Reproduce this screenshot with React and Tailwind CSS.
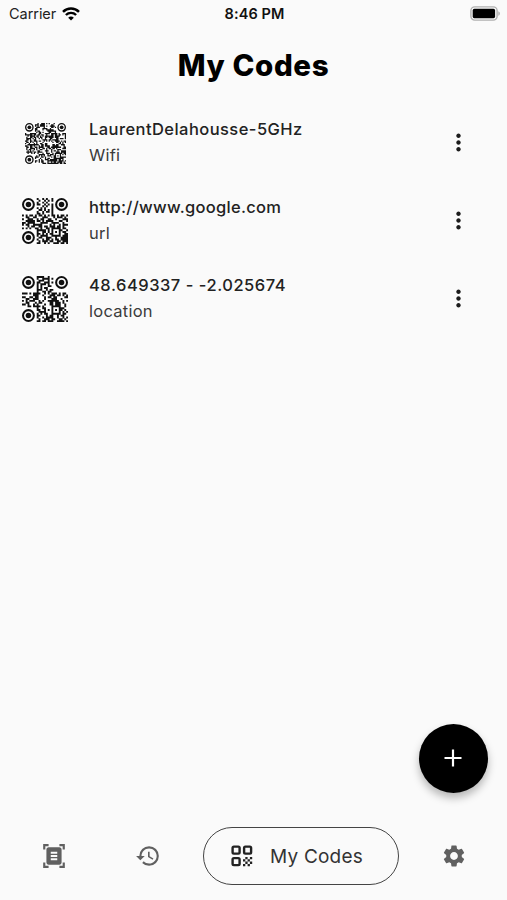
import React from "react";
import { MdDocumentScanner, MdHistory, MdSettings, MdMoreVert } from "react-icons/md";

const URL_ROWS = [
  "........#..#.#..#........",
  ".........#..#.#.#........",
  "........#..#.#...........",
  "........##..#.#.#........",
  "...........#.#..#........",
  "........#.#.#...#........",
  ".........##.#.#.#........",
  "........#..#.##.#........",
  "........##.#....#........",
  "#.#.##.#.##.#.#.##.#.##.#",
  "..##..##...###...#.###.#.",
  "#..###..#.##..##..#...###",
  "..#####.##.#.####...##..#",
  "##.####...####..####..#..",
  "#.##..#####....#.#..#.###",
  "...#.##..##.##.###.##.#..",
  "#.#.#..##.#..##.#####.##.",
  "........#####.#.#...##..#",
  "........#..##.#.#.#.#.##.",
  "........##.#.#.##...#..##",
  "........#.####..#####.###",
  ".........##..###..#..####",
  "........#..#.##.#.##.####",
  ".........#.###.##..##.###",
  "........##..#.#..###.##.#",
];

const LOCATION_ROWS = [
  "........####..#..........",
  "........#..####.#........",
  ".........###..#..........",
  "........##..###.#........",
  "........#.###.#..........",
  "........#.#...##.........",
  "........#.#.##...........",
  "........###..#.##........",
  "........#..##.##.........",
  "###.#.####..#.#.###.#.##.",
  "......###..#...###.##.#.#",
  "##..##.##...#.##.##....##",
  "..##..###...#...###..#...",
  "#.#.###..#.#..######..#.#",
  "..##...#.##....##.###.#..",
  "##.#..#.#...#..##.###..#.",
  "...##.####.#....#####..#.",
  "........#..##...#...###..",
  "........##..#.#.#.#.##.#.",
  ".........####...#...#.#.#",
  "........#.#.##..#####.##.",
  "........##...#.##..#.##..",
  "........#..#.####..#..#.#",
  ".........#..###.##..##.#.",
  "........##.##.###..####.#",
];

const WIFI_SIZE = 33;

function inFinder(x, y, n) {
  return (x < 8 && y < 8) || (x >= n - 8 && y < 8) || (x < 8 && y >= n - 8);
}

function buildWifiRows() {
  let seed = 4817;
  const rows = [];
  for (let y = 0; y < WIFI_SIZE; y++) {
    let row = "";
    for (let x = 0; x < WIFI_SIZE; x++) {
      seed = (seed * 1103515 + 12345) % 2147483648;
      const ring = Math.max(Math.abs(x - 26), Math.abs(y - 26));
      const on = ring <= 2 ? ring !== 1 : (seed >> 12) % 100 < 50;
      row += on ? "#" : ".";
    }
    rows.push(row);
  }
  return rows;
}

const WIFI_ROWS = buildWifiRows();

function QrCode({ rows, className }) {
  const n = rows.length;
  let d = "";
  rows.forEach((row, y) => {
    for (let x = 0; x < n; x++) {
      if (row[x] === "#" && !inFinder(x, y, n)) d += `M${x} ${y}h1.03v1.03h-1.03z`;
    }
  });
  const finders = [
    [3.5, 3.5],
    [n - 3.5, 3.5],
    [3.5, n - 3.5],
  ];
  return (
    <svg viewBox={`0 0 ${n} ${n}`} className={className}>
      <rect width={n} height={n} fill="#fff" />
      <path d={d} fill="#111" />
      {finders.map(([cx, cy]) => (
        <g key={`${cx}-${cy}`}>
          <circle cx={cx} cy={cy} r="2.95" fill="none" stroke="#111" strokeWidth="1.1" />
          <circle cx={cx} cy={cy} r="1.5" fill="#111" />
        </g>
      ))}
    </svg>
  );
}

const CODES = [
  { title: "LaurentDelahousse-5GHz", type: "Wifi", rows: WIFI_ROWS, size: "size-[41px]", track: "tracking-[0.44px]" },
  { title: "http://www.google.com", type: "url", rows: URL_ROWS, size: "size-[46px]", track: "tracking-[0.28px]" },
  { title: "48.649337 - -2.025674", type: "location", rows: LOCATION_ROWS, size: "size-[46px]", track: "tracking-[0.52px]" },
];

function WifiIcon() {
  return (
    <svg viewBox="0 0 18 14" className="h-[14px] w-[18px]" fill="none" stroke="#000">
      <path d="M1 4.9a11.4 11.4 0 0 1 16 0" strokeWidth="2.5" />
      <path d="M3.9 8a7.3 7.3 0 0 1 10.2 0" strokeWidth="2.4" />
      <path d="M9 13.6 6.2 10.8a3.9 3.9 0 0 1 5.6 0z" fill="#000" stroke="none" />
    </svg>
  );
}

function BatteryIcon() {
  return (
    <svg viewBox="0 0 31 15" className="h-[15px] w-[31px]">
      <rect x="1.9" y="0.9" width="26.2" height="13.2" rx="3.8" fill="#fafafa" stroke="#b0b0b0" strokeWidth="1.4" />
      <rect x="3.7" y="2.8" width="22.4" height="9.4" rx="1.6" fill="#000" />
      <path d="M29.3 5.2c2.1.8 2.1 3.8 0 4.6z" fill="#b0b0b0" />
    </svg>
  );
}

function QrNavIcon() {
  return (
    <svg viewBox="0 0 22 22" className="size-[22px]" fill="#222">
      <g fill="none" stroke="#222" strokeWidth="2.4">
        <rect x="1.6" y="1.6" width="7" height="7" rx="1.3" />
        <rect x="13.1" y="1.6" width="7" height="7" rx="1.3" />
        <rect x="1.6" y="13.1" width="7" height="7" rx="1.3" />
      </g>
      <path d="M14.3 12h2.3v2.3h-2.3zM18.9 12h2.3v2.3h-2.3zM12 14.3h2.3v2.3H12zM16.6 14.3h2.3v2.3h-2.3zM14.3 16.6h2.3v2.3h-2.3zM18.9 16.6h2.3v2.3h-2.3zM12 18.9h2.3v2.3H12zM16.6 18.9h2.3v2.3h-2.3z" />
    </svg>
  );
}

export default function App() {
  return (
    <div className="relative flex h-[900px] w-[507px] flex-col overflow-hidden bg-[#fafafa] font-['Inter',sans-serif] text-black">
      <header className="grid h-[27px] grid-cols-3 items-center pl-[9px] pr-[7px] text-[14.5px] leading-none">
        <div className="flex items-center gap-[6px] text-[#222]">
          <span className="pt-0.5 tracking-[-0.05px]">Carrier</span>
          <WifiIcon />
        </div>
        <div className="pt-0.5 text-center text-[14.5px] font-semibold tracking-[0.1px] text-[#111]">8:46 PM</div>
        <div className="flex justify-end">
          <BatteryIcon />
        </div>
      </header>

      <h1 className="mt-[18px] text-center text-[29.5px] font-extrabold leading-10 tracking-[0.6px]">My Codes</h1>

      <ul className="mt-[18px] flex flex-col">
        {CODES.map((code) => (
          <li key={code.title} className="flex h-[78px] items-center pl-[22px] pr-[35.5px]">
            <div className="flex w-[67px] items-center pt-[2px]">
              <div className="flex w-[46px] justify-center">
                <QrCode rows={code.rows} className={code.size} />
              </div>
            </div>
            <div className="flex-1">
              <p className={`text-[16.5px] font-medium leading-[26px] text-[#222] ${code.track}`}>{code.title}</p>
              <p className="text-[16.5px] leading-[26px] tracking-[0.25px] text-[#3c3c3c]">{code.type}</p>
            </div>
            <MdMoreVert className="size-[27px] text-[#1c1c1c]" />
          </li>
        ))}
      </ul>

      <nav className="mt-auto flex h-[88px] items-center">
        <button className="flex w-[107px] justify-center">
          <MdDocumentScanner className="size-[26px] text-[#606060]" />
        </button>
        <button className="flex w-[81px] justify-center">
          <MdHistory className="size-[26px] text-[#606060]" />
        </button>
        <button className="ml-[15px] flex h-[58px] w-[196px] shrink-0 items-center gap-[17px] rounded-full border-[1.4px] border-[#444] pl-[27px] text-[19px] tracking-[0.2px] text-[#333]">
          <QrNavIcon />
          <span className="pt-0.5">My Codes</span>
        </button>
        <button className="flex w-[108px] justify-center pl-[2px]">
          <MdSettings className="size-[26px] text-[#606060]" />
        </button>
      </nav>

      <button className="absolute left-[419px] top-[724px] flex size-[69px] items-center justify-center rounded-full bg-black shadow-[0_5px_8px_rgba(0,0,0,0.28)]">
        <svg viewBox="0 0 18 18" className="mb-px mr-px size-[18px]" stroke="#fff" strokeWidth="2.2">
          <path d="M9 0.5v17M0.5 9h17" />
        </svg>
      </button>
    </div>
  );
}
